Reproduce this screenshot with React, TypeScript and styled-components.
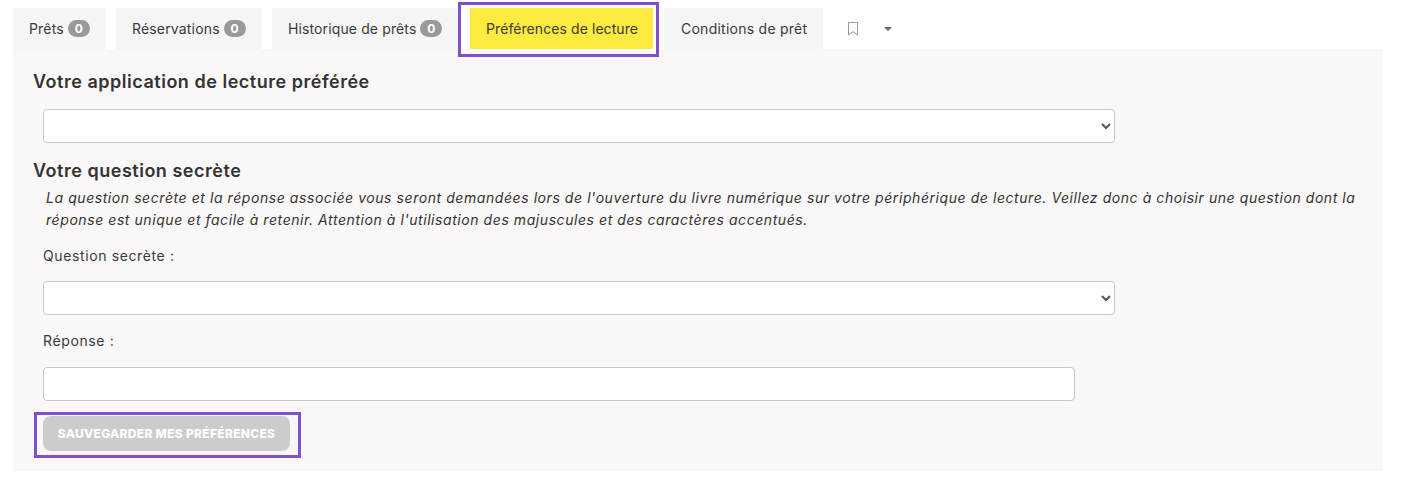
import React from 'react';
import styled, { createGlobalStyle } from 'styled-components';

const GlobalStyle = createGlobalStyle`
  html, body { margin: 0; background: #fff; }
  body { font-family: Inter, "Liberation Sans", sans-serif; color: #333; }
`;

const Page = styled.div`
  padding: 8px 34px 0 13px;
`;

const TabBar = styled.div`
  display: flex;
  height: 41px;
`;

const Tab = styled.div<{ $width: number; $gap?: number; $before?: number; $pad?: number; $spacing?: number; $active?: boolean }>`
  position: relative;
  width: ${(p) => p.$width}px;
  margin-left: ${(p) => p.$before || 0}px;
  margin-right: ${(p) => p.$gap || 0}px;
  padding-left: ${(p) => p.$pad || 16}px;
  box-sizing: border-box;
  display: flex;
  align-items: center;
  gap: 4px;
  font-size: 14px;
  letter-spacing: ${(p) => p.$spacing ?? 0.17}px;
  color: #3a3a3a;
  background: ${(p) => (p.$active ? '#ffeb3f' : '#f5f5f5')};
`;

const Highlight = styled.div`
  position: relative;
  z-index: 1;
  display: flex;
  &::before {
    content: '';
    position: absolute;
    left: -12px;
    right: -6px;
    top: -6px;
    bottom: -8px;
    border: 3px solid #7f50cc;
    background: linear-gradient(#fff 46px, #f9f7f8 46px);
    z-index: -1;
  }
`;

const Badge = styled.span`
  width: 22px;
  height: 17px;
  border-radius: 9px;
  background: #999;
  color: #fff;
  font-size: 12px;
  font-weight: 700;
  display: flex;
  align-items: center;
  justify-content: center;
`;

const IconTab = styled.div`
  display: flex;
  align-items: center;
  gap: 25px;
  padding-left: 24px;
`;

const Panel = styled.div`
  background: #f9f7f8;
  height: 422px;
  padding: 21px 0 0 20px;
  box-sizing: border-box;
`;

const Heading = styled.h2<{ $top?: number; $bottom: number }>`
  margin: ${(p) => p.$top || 0}px 0 ${(p) => p.$bottom}px;
  font-size: 18px;
  line-height: 24px;
  font-weight: 600;
  letter-spacing: 0.52px;
  color: #333;
`;

const Field = styled.div`
  margin-left: 10px;
`;

const Select = styled.select`
  display: block;
  width: 1072px;
  height: 34px;
  box-sizing: border-box;
  border: 1px solid #c8c8c8;
  border-radius: 4px;
  background: #fff;
  color: #555;
  font-size: 14px;
`;

const Input = styled.input`
  display: block;
  width: 1032px;
  height: 34px;
  box-sizing: border-box;
  border: 1px solid #c8c8c8;
  border-radius: 4px;
  background: #fff;
`;

const Note = styled.p`
  margin: 0 0 14px 13px;
  width: 1325px;
  font-size: 14px;
  line-height: 22px;
  font-style: italic;
  letter-spacing: 0.565px;
  color: #333;
`;

const Label = styled.div<{ $top: number; $bottom: number }>`
  margin: ${(p) => p.$top}px 0 ${(p) => p.$bottom}px;
  font-size: 14px;
  line-height: 22px;
  letter-spacing: 0.62px;
  color: #3a3a3a;
`;

const SaveWrap = styled.div`
  position: relative;
  z-index: 1;
  width: 247px;
  margin-top: 15px;
  &::before {
    content: '';
    position: absolute;
    left: -9px;
    right: -11px;
    top: -4px;
    bottom: -7px;
    border: 3px solid #7f50cc;
    z-index: -1;
  }
`;

const SaveButton = styled.button`
  display: block;
  width: 247px;
  height: 35px;
  border: none;
  border-radius: 8px;
  background: #cccccc;
  color: #fff;
  font-family: inherit;
  font-size: 12px;
  font-weight: 800;
  letter-spacing: 0.3px;
  padding: 0;
`;

export default function App() {
  return (
    <Page>
      <GlobalStyle />
      <TabBar>
        <Tab $width={93} $gap={10}>Prêts <Badge>0</Badge></Tab>
        <Tab $width={146} $gap={10}>Réservations <Badge>0</Badge></Tab>
        <Tab $width={187} $gap={11} $spacing={0.12}>Historique de prêts <Badge>0</Badge></Tab>
        <Highlight>
          <Tab $width={183} $spacing={0.08} $active>Préférences de lecture</Tab>
        </Highlight>
        <Tab $width={159} $before={11} $pad={17} $spacing={0.25}>Conditions de prêt</Tab>
        <IconTab>
          <svg width="12" height="14" viewBox="0 0 12 14" fill="none" stroke="#999" strokeWidth="1">
            <path d="M1.5 .5h9v12.5L6 9.5 1.5 13z" />
          </svg>
          <svg width="8" height="4" viewBox="0 0 8 4" fill="#666">
            <path d="M0 0h8L4 4z" />
          </svg>
        </IconTab>
      </TabBar>
      <Panel>
        <Heading $bottom={15}>Votre application de lecture préférée</Heading>
        <Field>
          <Select aria-label="Application" />
        </Field>
        <Heading $top={16} $bottom={4}>Votre question secrète</Heading>
        <Note>
          La question secrète et la réponse associée vous seront demandées lors de l'ouverture du livre numérique sur votre périphérique de lecture. Veillez donc à choisir une question dont la réponse est unique et facile à retenir. Attention à l'utilisation des majuscules et des caractères accentués.
        </Note>
        <Field>
          <Label $top={0} $bottom={14}>Question secrète :</Label>
          <Select aria-label="Question" />
          <Label $top={15} $bottom={15}>Réponse :</Label>
          <Input aria-label="Réponse" />
          <SaveWrap>
            <SaveButton>SAUVEGARDER MES PRÉFÉRENCES</SaveButton>
          </SaveWrap>
        </Field>
      </Panel>
    </Page>
  );
}
